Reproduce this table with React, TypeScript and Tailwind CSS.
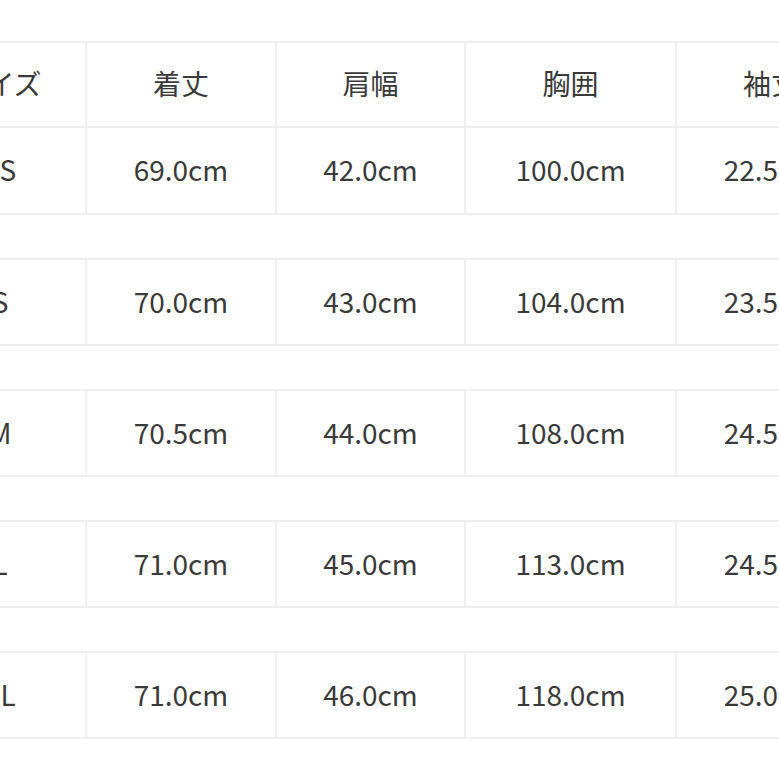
import React from "react";

const header = ["サイズ", "着丈", "肩幅", "胸囲", "袖丈"];

const rows = [
  ["XS", "69.0cm", "42.0cm", "100.0cm", "22.5cm"],
  ["S", "70.0cm", "43.0cm", "104.0cm", "23.5cm"],
  ["M", "70.5cm", "44.0cm", "108.0cm", "24.5cm"],
  ["L", "71.0cm", "45.0cm", "113.0cm", "24.5cm"],
  ["XL", "71.0cm", "46.0cm", "118.0cm", "25.0cm"],
];

const Row = ({ cells, top, tall }: { cells: string[]; top?: boolean; tall?: boolean }) => (
  <div
    className={`grid grid-cols-[172px_190px_189px_211px_190px] border-b-2 border-[#efefef] ${
      top ? "border-t-2" : ""
    } ${tall ? "h-[88px]" : "h-[87px]"}`}
  >
    {cells.map((c, i) => (
      <div
        key={i}
        className="flex items-center justify-center pb-[3px] border-r-2 border-[#efefef] text-[28px] text-[#3a3a3a]"
      >
        {c}
      </div>
    ))}
  </div>
);

export default function App() {
  return (
    <div
      className="w-[779px] h-[779px] overflow-hidden bg-white pt-[41px]"
      style={{ fontFamily: '"Noto Sans CJK JP", "Noto Sans", sans-serif' }}
    >
      <div className="ml-[-85px] w-[952px] flex flex-col">
        {/* header + first size share one block */}
        <div>
          <Row cells={header} top />
          <Row cells={rows[0]} />
        </div>
        {rows.slice(1).map((r, i) => (
          <div key={i} className="mt-[43px]">
            <Row cells={r} top tall />
          </div>
        ))}
      </div>
    </div>
  );
}
